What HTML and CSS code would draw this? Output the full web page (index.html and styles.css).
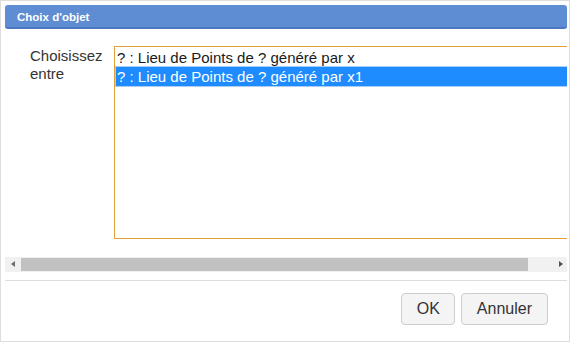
FILE: index.html
```html
<!DOCTYPE html>
<html lang="fr">
<head>
  <meta charset="UTF-8" />
  <title>Choix d'objet</title>
  <link rel="stylesheet" href="styles.css">
</head>
<body>

  <div class="dialog">
    <div class="titlebar">Choix d'objet</div>

    <div class="content">
      <div class="viewport">
        <label class="label" for="choix">Choisissez<br>entre</label>
        <div class="listbox" id="choix">
          <div class="option">? : Lieu de Points de ? généré par x</div>
          <div class="option selected">? : Lieu de Points de ? généré par x1</div>
        </div>
      </div>

      <div class="hscroll">
        <span class="arrow left"></span>
        <div class="track"><div class="thumb"></div></div>
        <span class="arrow right"></span>
      </div>
    </div>

    <div class="buttons">
      <button type="button">OK</button>
      <button type="button">Annuler</button>
    </div>
  </div>

</body>
</html>
```

FILE: styles.css
```css
* {
  box-sizing: border-box;
  margin: 0;
  padding: 0;
  font-family: 'Liberation Sans', Arial, sans-serif;
}

body {
  background: #fff;
  width: 570px;
  height: 344px;
  overflow: hidden;
}

.dialog {
  width: 570px;
  height: 342px;
  border: 1px solid #dedede;
  padding: 4px 2px 0 4px;
  display: flex;
  flex-direction: column;
}

.titlebar {
  height: 24px;
  background: #5f8dd3;
  border-bottom: 2px solid #4a78c2;
  border-radius: 3px;
  color: #fff;
  font-size: 11.5px;
  font-weight: 700;
  padding: 6px 0 0 12px;
}

/* Zone de contenu avec barre horizontale */
.content {
  padding-top: 17px;
}

.viewport {
  height: 211px;
  overflow: hidden;
  display: flex;
  align-items: flex-start;
  padding-left: 25px;
}

.label {
  flex: 0 0 84px;
  font-size: 15px;
  line-height: 18px;
  color: #333;
  padding-top: 1px;
}

.listbox {
  flex: 0 0 620px;
  height: 193px;
  border: 1px solid #e3a13a;
  padding: 1px 0 0 1px;
  background: #fff;
}

.option {
  font-size: 15px;
  line-height: 19px;
  color: #1a1a1a;
  padding-left: 1px;
  white-space: nowrap;
}

.option.selected {
  background: #1e8cff;
  color: #fff;
  box-shadow: 0 0 0 1px #a9cdf5;
}

.hscroll {
  height: 15px;
  background: #f1f1f1;
  display: flex;
  align-items: center;
}

.arrow {
  width: 16px;
  height: 15px;
  position: relative;
}

.arrow::after {
  content: "";
  position: absolute;
  top: 4px;
  border-top: 3.5px solid transparent;
  border-bottom: 3.5px solid transparent;
}

.arrow.left::after {
  left: 6px;
  border-right: 4px solid #6b6b6b;
}

.arrow.right::after {
  left: 8px;
  border-left: 4px solid #505050;
}

.track {
  flex: 1;
  height: 13px;
}

.thumb {
  height: 13px;
  margin-right: 23px;
  background: #c1c1c1;
}

/* Boutons */
.buttons {
  margin-top: 8px;
  border-top: 1px solid #ddd;
  display: flex;
  justify-content: flex-end;
  gap: 6px;
  padding: 12px 19px 0 0;
}

button {
  height: 32px;
  padding: 0 15px;
  font-size: 16px;
  color: #333;
  background: #f4f4f4;
  border: 1px solid #cdcdcd;
  border-radius: 4px;
}

button:first-child {
  width: 54px;
}
```
